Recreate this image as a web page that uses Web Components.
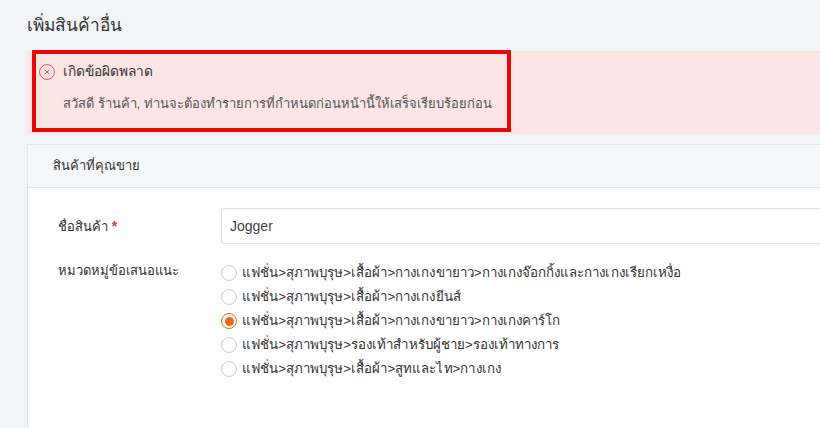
<!DOCTYPE html>
<html lang="th">
<head>
<meta charset="utf-8">
<title>เพิ่มสินค้าอื่น</title>
<style>
  html, body { margin: 0; height: 100%; overflow: hidden; }
  body {
    background: #f1f3f7;
    color: #333;
    font: 13px/20px "Liberation Sans", "Noto Sans", sans-serif;
  }
</style>
</head>
<body>
<add-product-page>
  <error-alert title-text="เกิดข้อผิดพลาด">สวัสดี ร้านค้า, ท่านจะต้องทำรายการที่กำหนดก่อนหน้านี้ให้เสร็จเรียบร้อยก่อน</error-alert>
  <form-card heading="สินค้าที่คุณขาย">
    <form-row label="ชื่อสินค้า" required>
      <text-field value="Jogger"></text-field>
    </form-row>
    <form-row label="หมวดหมู่ข้อเสนอแนะ" compact>
      <radio-option>แฟชั่น&gt;สุภาพบุรุษ&gt;เสื้อผ้า&gt;กางเกงขายาว&gt;กางเกงจ๊อกกิ้งและกางเกงเรียกเหงื่อ</radio-option>
      <radio-option>แฟชั่น&gt;สุภาพบุรุษ&gt;เสื้อผ้า&gt;กางเกงยีนส์</radio-option>
      <radio-option checked>แฟชั่น&gt;สุภาพบุรุษ&gt;เสื้อผ้า&gt;กางเกงขายาว&gt;กางเกงคาร์โก</radio-option>
      <radio-option>แฟชั่น&gt;สุภาพบุรุษ&gt;รองเท้าสำหรับผู้ชาย&gt;รองเท้าทางการ</radio-option>
      <radio-option>แฟชั่น&gt;สุภาพบุรุษ&gt;เสื้อผ้า&gt;สูทและไท&gt;กางเกง</radio-option>
    </form-row>
  </form-card>
</add-product-page>

<script>
class AddProductPage extends HTMLElement {
    constructor() {
        super();
        this.attachShadow({ mode: 'open' }).innerHTML = `
        <style>
          :host { display: block; padding: 13px 0 0 27px; }
          h1 { margin: 0 0 14px; font-size: 17.3px; line-height: 24px; font-weight: 400; color: #333; }
        </style>
        <h1>เพิ่มสินค้าอื่น</h1>
        <slot></slot>
      `;
    }
}
customElements.define('add-product-page', AddProductPage);

class ErrorAlert extends HTMLElement {
    constructor() {
        super();
        this.attachShadow({ mode: 'open' }).innerHTML = `
        <style>
          :host { display: block; position: relative; height: 83px; box-sizing: border-box; padding: 11px 12px; background: #fbe5e5; margin-bottom: 10px; }
          .title { display: flex; align-items: center; gap: 8px; height: 20px; color: #333; font-size: 13.8px; }
          svg { width: 16px; height: 16px; }
          .msg { margin: 12px 0 0 24px; color: #555; }
          /* the red frame drawn over the screenshot */
          .mark { position: absolute; left: 5px; top: -1px; width: 479px; height: 82px; box-sizing: border-box; border: 4px solid #e90808; }
        </style>
        <div class="title">
          <svg viewBox="0 0 16 16" fill="none" stroke="#e4535b" stroke-width="1"><circle cx="8" cy="8" r="7.4"/><path d="M5.6 5.6l4.8 4.8M10.4 5.6l-4.8 4.8"/></svg>
          <span>${this.getAttribute('title-text')}</span>
        </div>
        <div class="msg"><slot></slot></div>
        <div class="mark"></div>
      `;
    }
}
customElements.define('error-alert', ErrorAlert);

class FormCard extends HTMLElement {
    constructor() {
        super();
        this.attachShadow({ mode: 'open' }).innerHTML = `
        <style>
          :host { display: block; background: #fff; border: 1px solid #e1e6ee; border-right: 0; border-bottom: 0; height: 300px; }
          header { height: 43px; box-sizing: border-box; padding: 11px 25px; background: #f6f7fa; border-bottom: 1px solid #e1e6ee; color: #333; }
          .body { padding: 20px 0 0 30px; }
        </style>
        <header>${this.getAttribute('heading')}</header>
        <div class="body"><slot></slot></div>
      `;
    }
}
customElements.define('form-card', FormCard);

class FormRow extends HTMLElement {
    constructor() {
        super();
        const star = this.hasAttribute('required') ? ' <b>*</b>' : '';
        this.attachShadow({ mode: 'open' }).innerHTML = `
        <style>
          :host { display: grid; grid-template-columns: 163px 1fr; margin-bottom: 17px; }
          .label { padding-top: 8px; color: #333; }
          :host([compact]) .label { padding-top: 0; }
          b { color: #e4393c; font-size: 14px; }
          .control { min-width: 0; }
        </style>
        <div class="label">${this.getAttribute('label')}${star}</div>
        <div class="control"><slot></slot></div>
      `;
    }
}
customElements.define('form-row', FormRow);

class TextField extends HTMLElement {
    constructor() {
        super();
        this.attachShadow({ mode: 'open' }).innerHTML = `
        <style>
          :host { display: block; }
          input { display: block; width: 100%; height: 36px; box-sizing: border-box; padding: 0 8px; border: 1px solid #dcdfe6; border-right: 0; border-radius: 3px 0 0 3px; outline: 0; background: #fff; color: #444; font: 14px "Liberation Sans", sans-serif; }
        </style>
        <input type="text" value="${this.getAttribute('value') || ''}">
      `;
    }
}
customElements.define('text-field', TextField);

class RadioOption extends HTMLElement {
    constructor() {
        super();
        this.attachShadow({ mode: 'open' }).innerHTML = `
        <style>
          :host { display: flex; align-items: center; gap: 5px; height: 24px; color: #333; font-size: 13.3px; letter-spacing: .05px; }
          .dot { flex: none; width: 16px; height: 16px; box-sizing: border-box; border: 1px solid #ccc; border-radius: 50%; background: #fff; display: grid; place-items: center; }
          .dot i { display: none; width: 9px; height: 9px; border-radius: 50%; background: #f2620f; }
          :host([checked]) .dot { border-color: #f2620f; }
          :host([checked]) .dot i { display: block; }
        </style>
        <span class="dot"><i></i></span>
        <span><slot></slot></span>
      `;
    }
}
customElements.define('radio-option', RadioOption);
</script>
</body>
</html>
